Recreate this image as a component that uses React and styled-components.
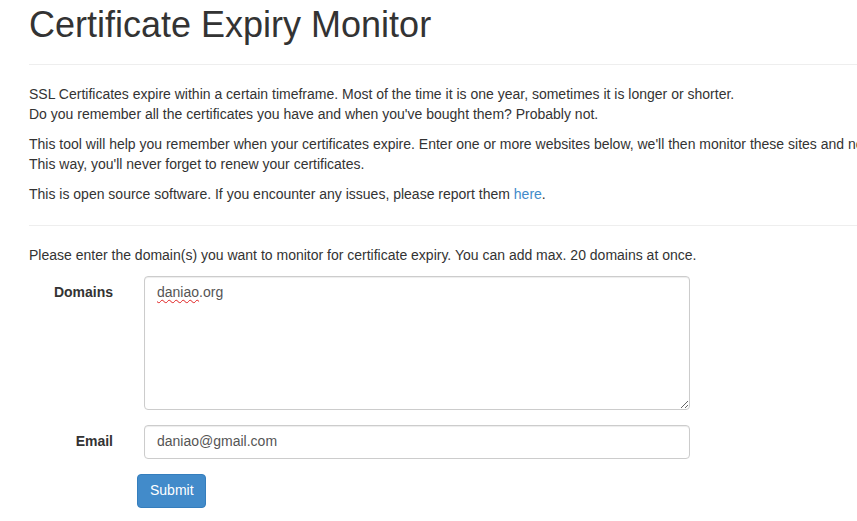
import React from "react";
import styled, { createGlobalStyle } from "styled-components";

const Global = createGlobalStyle`
  html, body { margin: 0; padding: 0; overflow: hidden; background: #fff; }
  body {
    font-family: "Liberation Sans", Arial, Helvetica, sans-serif;
    font-size: 14px;
    line-height: 1.428571;
    color: #333;
  }
  * { box-sizing: border-box; }
`;

const Page = styled.div`
  width: 1170px;
  padding: 0 0 10px 29px;
`;

const Header = styled.div`
  padding-bottom: 9px;
  margin: 0 0 20px;
  border-bottom: 1px solid #eee;
`;

const Title = styled.h1`
  margin: 5px 0 10px;
  font-size: 36px;
  font-weight: 500;
  line-height: 1.1;
  color: #333;
`;

const P = styled.p`
  margin: 0 0 10px;
`;

const Link = styled.a`
  color: #428bca;
  text-decoration: none;
`;

const Rule = styled.hr`
  margin: 20px 0;
  border: 0;
  border-top: 1px solid #eee;
`;

const Form = styled.form`
  display: flex;
  flex-direction: column;
  gap: 15px;
`;

const Group = styled.div`
  display: grid;
  grid-template-columns: 84px 546px;
  column-gap: 31px;
`;

const Label = styled.label`
  padding-top: 7px;
  text-align: right;
  font-weight: bold;
`;

const Box = styled.div`
  width: 546px;
  height: ${(p) => p.$h}px;
  padding: 6px 12px;
  border: 1px solid #ccc;
  border-radius: 4px;
  box-shadow: inset 0 1px 1px rgba(0, 0, 0, 0.075);
  color: #555;
  background: #fff;
  overflow: ${(p) => (p.$area ? "auto" : "hidden")};
  resize: ${(p) => (p.$area ? "vertical" : "none")};
  white-space: nowrap;
`;

const Misspelled = styled.span`
  text-decoration: underline wavy #e02020;
  text-decoration-thickness: 1px;
  text-underline-offset: 2px;
`;

const Actions = styled.div`
  padding-left: 108px;
`;

const Button = styled.button`
  font-family: inherit;
  font-size: 14px;
  line-height: 1.428571;
  padding: 6px 12px;
  height: 34px;
  width: 69px;
  color: #fff;
  background: #428bca;
  border: 1px solid #357ebd;
  border-radius: 4px;
  cursor: pointer;
`;

export default function App() {
  return (
    <>
      <Global />
      <Page>
        <Header>
          <Title>Certificate Expiry Monitor</Title>
        </Header>
        <P>
          SSL Certificates expire within a certain timeframe. Most of the time it is one year, sometimes it is longer or shorter.
          <br />
          Do you remember all the certificates you have and when you've bought them? Probably not.
        </P>
        <P>
          This tool will help you remember when your certificates expire. Enter one or more websites below, we'll then monitor these sites and notify you when a certificate is about to expire.
          <br />
          This way, you'll never forget to renew your certificates.
        </P>
        <P>
          This is open source software. If you encounter any issues, please report them <Link href="#">here</Link>.
        </P>
        <Rule />
        <P>Please enter the domain(s) you want to monitor for certificate expiry. You can add max. 20 domains at once.</P>
        <Form onSubmit={(e) => e.preventDefault()}>
          <Group>
            <Label>Domains</Label>
            <Box $area $h={134} role="textbox" aria-multiline="true">
              <Misspelled>daniao</Misspelled>.org
            </Box>
          </Group>
          <Group>
            <Label>Email</Label>
            <Box $h={34} role="textbox">daniao@gmail.com</Box>
          </Group>
          <Actions>
            <Button type="submit">Submit</Button>
          </Actions>
        </Form>
      </Page>
    </>
  );
}
